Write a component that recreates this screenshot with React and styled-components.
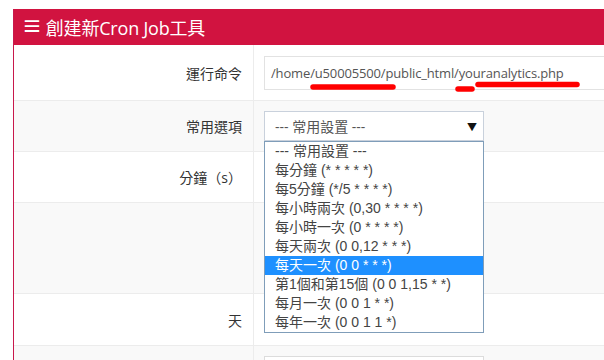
import React from "react";
import styled, { createGlobalStyle } from "styled-components";

const GlobalStyle = createGlobalStyle`
  html, body {
    margin: 0;
    background: #fff;
  }
  body {
    font-family: "Open Sans", "Noto Sans CJK TC", sans-serif;
    color: #333;
  }
`;

const options = [
  "--- 常用設置 ---",
  "每分鐘 (* * * * *)",
  "每5分鐘 (*/5 * * * *)",
  "每小時兩次 (0,30 * * * *)",
  "每小時一次 (0 * * * *)",
  "每天兩次 (0 0,12 * * *)",
  "每天一次 (0 0 * * *)",
  "第1個和第15個 (0 0 1,15 * *)",
  "每月一次 (0 0 1 * *)",
  "每年一次 (0 0 1 1 *)",
];

const Marks = () => (
  <MarkLayer width="340" height="20" viewBox="0 0 340 20">
    <g stroke="#f00" strokeWidth="5.5" strokeLinecap="round" fill="none">
      <line x1="48" y1="11" x2="128" y2="11" />
      <line x1="193" y1="13" x2="207" y2="13" />
      <line x1="213" y1="8.5" x2="312" y2="8.5" />
    </g>
  </MarkLayer>
);

const App = () => {
  return (
    <>
      <GlobalStyle />
      <Page>
        <Panel>
          <Header>
            <Burger>≡</Burger>創建新Cron Job工具
          </Header>
          <Row h={56}>
            <Label>運行命令</Label>
            <Field>
              <TextBox>
                /home/u50005500/public_html/youranalytics.php
                <Marks />
              </TextBox>
            </Field>
          </Row>
          <Row h={51} striped>
            <Label>常用選項</Label>
            <Field>
              <SelectBox>
                <span>--- 常用設置 ---</span>
                <Arrow>▼</Arrow>
                <DropList>
                  {options.map((o, i) => (
                    <Option key={o} active={i === 6}>
                      {o}
                    </Option>
                  ))}
                </DropList>
              </SelectBox>
            </Field>
          </Row>
          <Row h={51}>
            <Label>分鐘（s）</Label>
            <Field />
          </Row>
          <Row h={91} striped>
            <Label />
            <Field />
          </Row>
          <Row h={52}>
            <Label>天</Label>
            <Field />
          </Row>
          <Row h={60} striped top>
            <Label />
            <Field>
              <SmallBox />
            </Field>
          </Row>
        </Panel>
      </Page>
    </>
  );
};

export default App;

const Page = styled.div`
  width: 604px;
  height: 360px;
  overflow: hidden;
  padding: 9px 0 0 13px;
  box-sizing: border-box;
`;

const Panel = styled.div`
  width: 720px;
  border-left: 1px solid #c8184c;
`;

const Header = styled.div`
  height: 36px;
  background: #d11340;
  color: #fff;
  font-size: 18px;
  display: flex;
  align-items: center;
  padding-left: 8px;
  letter-spacing: -0.2px;
`;

const Burger = styled.span`
  font-size: 20px;
  font-weight: 600;
  margin-right: 4px;
  line-height: 1;
`;

const Row = styled.div`
  display: grid;
  grid-template-columns: 240px 1fr;
  height: ${p => p.h}px;
  box-sizing: border-box;
  border-bottom: 1px solid #ececec;
  background: ${p => (p.striped ? "#f9f9f9" : "#fff")};
  align-items: ${p => (p.top ? "start" : "stretch")};
`;

const Label = styled.div`
  display: flex;
  align-items: center;
  justify-content: flex-end;
  padding-right: 11px;
  border-right: 1px solid #ececec;
  font-size: 14px;
  color: #333;
  height: 100%;
`;

const Field = styled.div`
  display: flex;
  align-items: center;
  padding-left: 10px;
`;

const TextBox = styled.div`
  position: relative;
  width: 100%;
  height: 34px;
  box-sizing: border-box;
  border: 1px solid #e2e2e2;
  background: #fff;
  display: flex;
  align-items: center;
  padding-left: 6px;
  font-size: 13px;
  letter-spacing: -0.15px;
  color: #555;
`;

const MarkLayer = styled.svg`
  position: absolute;
  left: 0;
  top: 19px;
  overflow: visible;
`;

const SelectBox = styled.div`
  position: relative;
  width: 220px;
  height: 30px;
  box-sizing: border-box;
  border: 1px solid #c9d1dc;
  background: #fff;
  display: flex;
  align-items: center;
  justify-content: space-between;
  padding: 0 6px 0 10px;
  font-size: 14px;
  color: #555;
`;

const Arrow = styled.span`
  font-size: 10px;
  color: #111;
`;

const DropList = styled.div`
  position: absolute;
  top: 29px;
  left: -1px;
  width: 220px;
  box-sizing: border-box;
  border: 1px solid #7f9db9;
  background: #fff;
  z-index: 5;
`;

const Option = styled.div`
  height: 19px;
  line-height: 19px;
  padding-left: 10px;
  font-family: "Liberation Sans", "Noto Sans CJK TC", sans-serif;
  font-size: 14px;
  white-space: nowrap;
  background: ${p => (p.active ? "#1e90ff" : "transparent")};
  color: ${p => (p.active ? "#fff" : "#444")};
`;

const SmallBox = styled.div`
  margin-top: 10px;
  width: 220px;
  height: 30px;
  box-sizing: border-box;
  border: 1px solid #dcdcdc;
  background: #fff;
`;
